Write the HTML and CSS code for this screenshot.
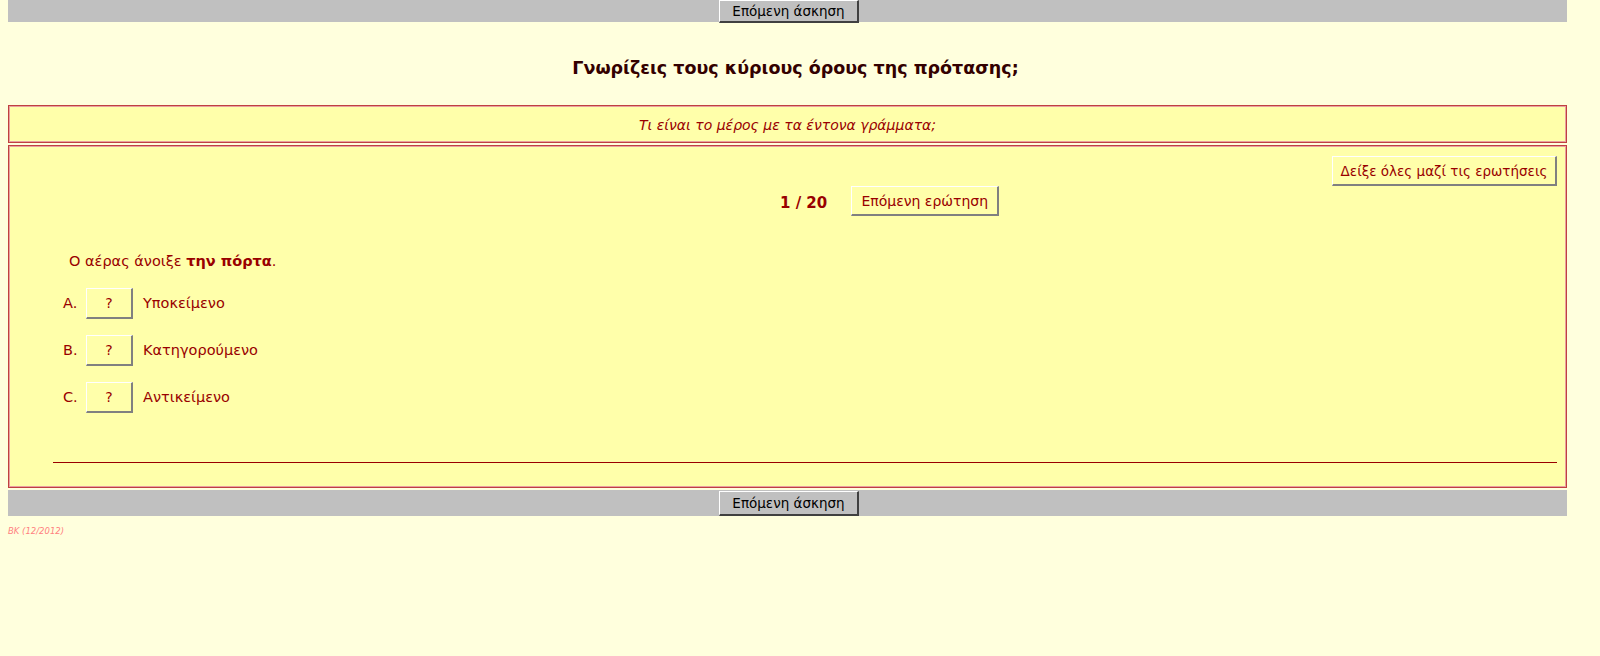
FILE: index.html
```html
<!DOCTYPE html>
<html lang="el">
<head>
<meta charset="utf-8">
<title>Γνωρίζεις τους κύριους όρους της πρότασης;</title>
<link rel="stylesheet" href="styles.css">
</head>
<body>
<div class="page">
  <div class="navbar top">
    <button class="navbtn">Επόμενη άσκηση</button>
  </div>
  <h2 class="title">Γνωρίζεις τους κύριους όρους της πρότασης;</h2>
  <div class="box instructions">Τι είναι το μέρος με τα έντονα γράμματα;</div>
  <div class="box main">
    <div class="showall-row">
      <button class="fbtn showall">Δείξε όλες μαζί τις ερωτήσεις</button>
    </div>
    <div class="qnav">
      <span class="readout">1 / 20</span>
      <button class="fbtn">Επόμενη ερώτηση</button>
    </div>
    <div class="question">Ο αέρας άνοιξε <b>την πόρτα</b>.</div>
    <ol class="answers">
      <li class="answer"><span class="letter">A.</span><button class="fbtn qbtn">?</button><span>Υποκείμενο</span></li>
      <li class="answer"><span class="letter">B.</span><button class="fbtn qbtn">?</button><span>Κατηγορούμενο</span></li>
      <li class="answer"><span class="letter">C.</span><button class="fbtn qbtn">?</button><span>Αντικείμενο</span></li>
    </ol>
    <hr class="qsep">
  </div>
  <div class="navbar bottom">
    <button class="navbtn">Επόμενη άσκηση</button>
  </div>
  <div class="footer">BK (12/2012)</div>
</div>
</body>
</html>
```

FILE: styles.css
```css
html, body {
  margin: 0;
  padding: 0;
  background: #ffffdd;
}
body {
  padding: 0 8px;
  font-family: "DejaVu Sans", Verdana, sans-serif;
  font-size: 13px;
}
.page {
  width: 1559px;
  display: flex;
  flex-direction: column;
}
.navbar {
  background: #c0c0c0;
  display: flex;
  justify-content: center;
}
.navbar.top {
  height: 22px;
  align-items: flex-start;
}
.navbar.bottom {
  height: 26px;
  margin-top: 2px;
  align-items: flex-start;
  padding-top: 1px;
  box-sizing: border-box;
}
.navbtn {
  font-family: "DejaVu Sans", Verdana, sans-serif;
  font-size: 13.5px;
  color: #000;
  background: #c0c0c0;
  border-style: solid;
  border-width: 1px 2px 2px 1px;
  border-color: #ffffff #404040 #404040 #ffffff;
  height: 23px;
  width: 140px;
  padding: 0;
  margin-left: 3px;
}
.navbar.bottom .navbtn {
  height: 25px;
}
.title {
  margin: 0;
  height: 83px;
  display: flex;
  align-items: center;
  justify-content: center;
  padding: 8px 0 0 16px;
  box-sizing: border-box;
  font-size: 17.5px;
  font-weight: bold;
  color: #330000;
}
.box {
  background: #ffffaa;
  border: 1px solid #c04040;
  box-shadow: inset 0 0 0 1px #e8a0a0;
  color: #990000;
}
.instructions {
  height: 38px;
  box-sizing: border-box;
  display: flex;
  align-items: center;
  justify-content: center;
  font-style: italic;
  font-size: 14px;
  padding-top: 1px;
}
.main {
  margin-top: 2px;
  height: 343px;
  box-sizing: border-box;
  padding: 10px 9px 0 44px;
  display: flex;
  flex-direction: column;
}
.fbtn {
  font-family: "DejaVu Sans", Verdana, sans-serif;
  font-size: 14px;
  color: #990000;
  background: #ffffaa;
  border-style: solid;
  border-width: 1px 2px 2px 1px;
  border-color: #ffffff #808080 #808080 #ffffff;
  padding: 0 8px;
  white-space: nowrap;
}
.showall-row {
  display: flex;
  justify-content: flex-end;
}
.showall {
  height: 30px;
  width: 225px;
  font-size: 13.5px;
  padding: 0 4px;
}
.qnav {
  display: flex;
  align-items: center;
  padding-left: 727px;
  gap: 24px;
  height: 30px;
}
.qnav .fbtn {
  height: 30px;
  width: 148px;
}
.readout {
  font-weight: bold;
  font-size: 15px;
  padding-top: 4px;
}
.question {
  margin-top: 37px;
  padding-left: 16px;
  font-size: 14.5px;
  height: 18px;
}
.answers {
  list-style: none;
  margin: 17px 0 0;
  padding: 0 0 0 10px;
  display: flex;
  flex-direction: column;
  gap: 17px;
  font-size: 14.5px;
}
.answer {
  display: flex;
  align-items: center;
  height: 30px;
}
.letter {
  width: 23px;
}
.qbtn {
  width: 47px;
  height: 31px;
  margin-right: 10px;
}
.qsep {
  margin: 50px 0 0;
  border: 0;
  height: 1px;
  background: #990000;
  width: 100%;
}
.footer {
  font-style: italic;
  font-size: 8.5px;
  color: #ff8080;
  margin-top: 10px;
}
```
